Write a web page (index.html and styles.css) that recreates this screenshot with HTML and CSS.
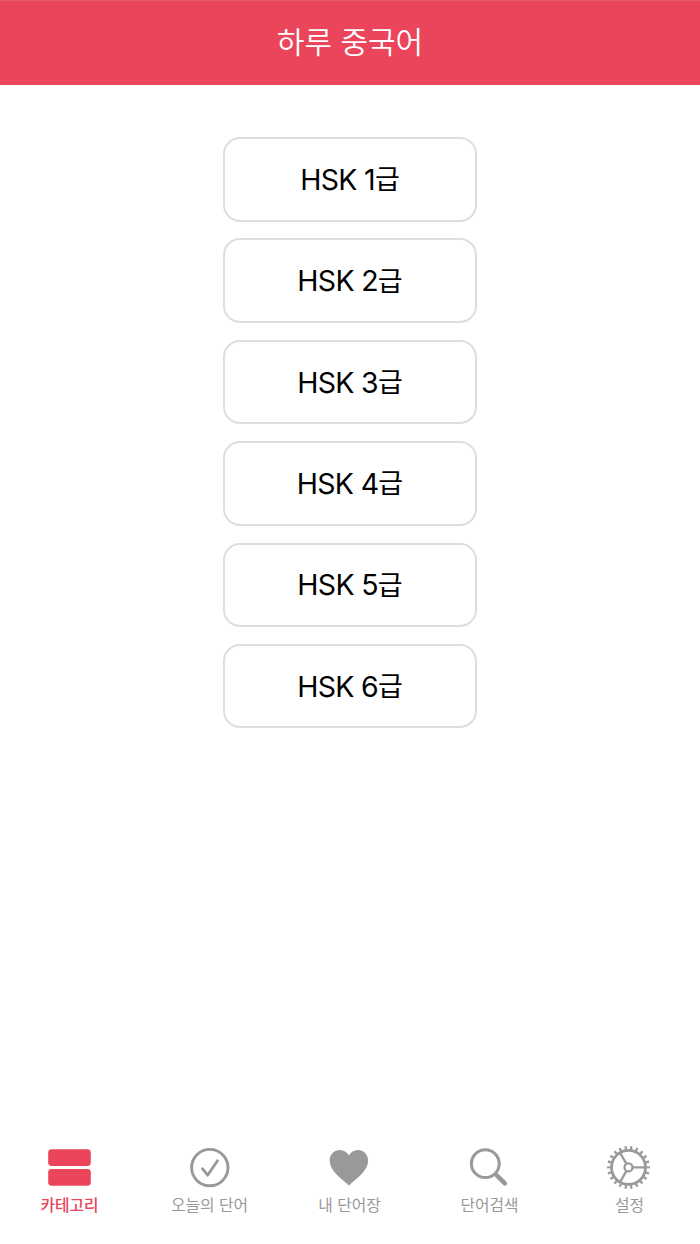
FILE: index.html
```html
<!DOCTYPE html>
<html lang="ko">
<head>
<meta charset="utf-8">
<title>하루 중국어</title>
<link rel="stylesheet" href="styles.css">
</head>
<body>
<div class="app">
  <header class="header"><h1 class="title">하루 중국어</h1></header>
  <main class="levels">
    <button class="level"><span class="latin">HSK 1</span><span class="unit">급</span></button>
    <button class="level"><span class="latin">HSK 2</span><span class="unit">급</span></button>
    <button class="level"><span class="latin">HSK 3</span><span class="unit">급</span></button>
    <button class="level"><span class="latin">HSK 4</span><span class="unit">급</span></button>
    <button class="level"><span class="latin">HSK 5</span><span class="unit">급</span></button>
    <button class="level"><span class="latin">HSK 6</span><span class="unit">급</span></button>
  </main>
  <nav class="tabs">
    <a class="tab active">
      <svg class="icon" viewBox="0 0 48 48" fill="currentColor"><rect x="2.2" y="5.2" width="42.6" height="16.8" rx="3.4"/><rect x="2.2" y="24.9" width="42.6" height="16.8" rx="3.4"/></svg>
      <span class="label">카테고리</span>
    </a>
    <a class="tab">
      <svg class="icon" viewBox="0 0 48 48" fill="none" stroke="currentColor" stroke-width="2.9" stroke-linecap="round" stroke-linejoin="round"><circle cx="23.8" cy="23.6" r="18.2"/><path d="M16.4 24.7l5.2 6.5L31.5 16.8"/></svg>
      <span class="label">오늘의 단어</span>
    </a>
    <a class="tab">
      <svg class="icon" viewBox="0 0 48 48" fill="currentColor"><path d="M22.9 41.8C20.9 38.8 13.2 34.3 8.2 27.8C5 23.8 3.7 20 3.7 16.3C3.7 10.4 8.2 6 13.8 6C17.8 6 21.1 8.1 22.9 11.4C24.7 8.1 28 6 32 6C37.6 6 42.1 10.4 42.1 16.3C42.1 20 40.8 23.8 37.6 27.8C32.6 34.3 24.9 38.8 22.9 41.8Z"/></svg>
      <span class="label">내 단어장</span>
    </a>
    <a class="tab">
      <svg class="icon" viewBox="0 0 48 48" fill="none" stroke="currentColor" stroke-linecap="round"><circle cx="19.3" cy="19.7" r="13.9" stroke-width="3"/><path d="M29.6 30.1l1.5 1.5" stroke-width="3.4"/><path d="M31 31.6l7.8 7.8" stroke-width="4.6"/></svg>
      <span class="label">단어검색</span>
    </a>
    <a class="tab">
      <svg class="icon" viewBox="0 0 48 48" fill="none" stroke="currentColor" stroke-width="2.3"><circle cx="22.5" cy="23.4" r="17" stroke-width="2.8"/><circle cx="22.5" cy="23.4" r="19.6" stroke-width="3.6" pathLength="220" stroke-dasharray="4 6" stroke-dashoffset="2"/><circle cx="22.5" cy="23.4" r="4"/><path d="M26.5 23.4H39.2M20.5 19.9L14.1 8.9M20.5 26.9L14.1 37.9"/></svg>
      <span class="label">설정</span>
    </a>
  </nav>
</div>
</body>
</html>
```
FILE: styles.css
```css
* { box-sizing: border-box; }
body { margin: 0; background: #fff; font-family: "Noto Sans CJK KR", sans-serif; }
.app { height: 1244px; display: flex; flex-direction: column; }
.header { height: 84.5px; background: #ea455b; border-top: 1px solid #e75a6c; display: flex; align-items: center; justify-content: center; }
.title { margin: 0; padding-bottom: 6px; color: #fff; font-size: 30px; font-weight: 350; line-height: 44px; }
.levels { flex: 1; display: flex; flex-direction: column; align-items: center; gap: 16.9px; padding-top: 52.5px; }
.level { width: 254px; height: 84.5px; padding: 0; border: 2px solid #dedede; border-radius: 17px; background: #fff; color: #000; display: flex; align-items: center; justify-content: center; line-height: 40px; }
.latin { padding-top: 1px; font-family: Inter, sans-serif; font-size: 28.5px; letter-spacing: -0.7px; white-space: pre; }
.unit { padding-bottom: 2px; font-family: "Noto Sans CJK KR", sans-serif; font-size: 27px; }
.tabs { height: 104px; display: flex; }
.tab { flex: 1; display: flex; flex-direction: column; align-items: center; color: #999; }
.icon { width: 48px; height: 48px; margin-top: 4px; }
.label { margin: 2px 1px 0 0; font-size: 15.8px; line-height: 22px; white-space: nowrap; }
.active { color: #ea455b; }
.active .label { font-weight: 500; }
```
